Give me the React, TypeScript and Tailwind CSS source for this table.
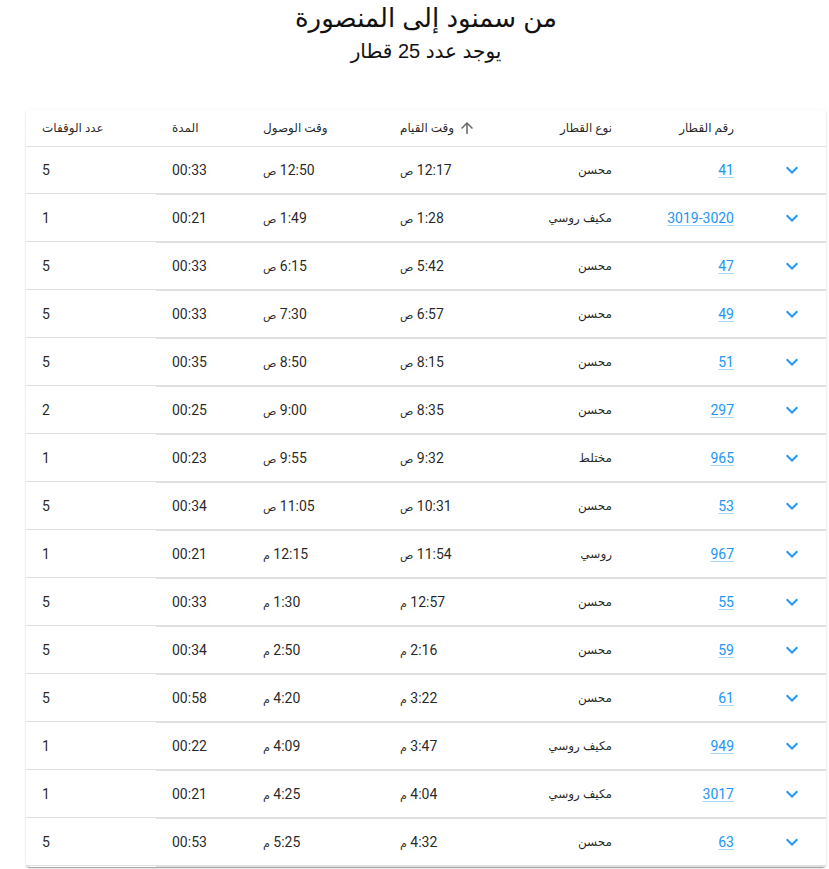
import React from "react";

type Row = { num: string; type: string; dep: string; arr: string; dur: string; stops: string };

const rows: Row[] = [
  { num: "41", type: "محسن", dep: "12:17 ص", arr: "12:50 ص", dur: "00:33", stops: "5" },
  { num: "3019-3020", type: "مكيف روسي", dep: "1:28 ص", arr: "1:49 ص", dur: "00:21", stops: "1" },
  { num: "47", type: "محسن", dep: "5:42 ص", arr: "6:15 ص", dur: "00:33", stops: "5" },
  { num: "49", type: "محسن", dep: "6:57 ص", arr: "7:30 ص", dur: "00:33", stops: "5" },
  { num: "51", type: "محسن", dep: "8:15 ص", arr: "8:50 ص", dur: "00:35", stops: "5" },
  { num: "297", type: "محسن", dep: "8:35 ص", arr: "9:00 ص", dur: "00:25", stops: "2" },
  { num: "965", type: "مختلط", dep: "9:32 ص", arr: "9:55 ص", dur: "00:23", stops: "1" },
  { num: "53", type: "محسن", dep: "10:31 ص", arr: "11:05 ص", dur: "00:34", stops: "5" },
  { num: "967", type: "روسي", dep: "11:54 ص", arr: "12:15 م", dur: "00:21", stops: "1" },
  { num: "55", type: "محسن", dep: "12:57 م", arr: "1:30 م", dur: "00:33", stops: "5" },
  { num: "59", type: "محسن", dep: "2:16 م", arr: "2:50 م", dur: "00:34", stops: "5" },
  { num: "61", type: "محسن", dep: "3:22 م", arr: "4:20 م", dur: "00:58", stops: "5" },
  { num: "949", type: "مكيف روسي", dep: "3:47 م", arr: "4:09 م", dur: "00:22", stops: "1" },
  { num: "3017", type: "مكيف روسي", dep: "4:04 م", arr: "4:25 م", dur: "00:21", stops: "1" },
  { num: "63", type: "محسن", dep: "4:32 م", arr: "5:25 م", dur: "00:53", stops: "5" },
];

const grid = "grid grid-cols-[76px_122px_108px_136px_137px_91px_130px]";
const font = { fontFamily: "Roboto, 'DejaVu Sans', sans-serif" };

function Chevron() {
  return (
    <svg width="24" height="24" viewBox="0 0 24 24" className="fill-[#2196f3]">
      <path d="M7.41 8.59 12 13.17l4.59-4.58L18 10l-6 6-6-6 1.41-1.41z" />
    </svg>
  );
}

function ArrowUp() {
  return (
    <svg width="18" height="18" viewBox="0 0 24 24" className="fill-[#666]">
      <path d="M4 12l1.41 1.41L11 7.83V20h2V7.83l5.58 5.59L20 12l-8-8-8 8z" />
    </svg>
  );
}

function Time({ v }: { v: string }) {
  const [t, s] = v.split(" ");
  return (
    <span>
      <span className="text-[14px]">{t}</span> <span className="text-[11px]">{s}</span>
    </span>
  );
}

export default function App() {
  return (
    <div dir="rtl" className="bg-white min-h-[869px] text-[rgba(0,0,0,0.87)]" style={font}>
      <div className="ml-[26px] mr-auto w-[800px]">
        <div className="text-center" style={{ fontFamily: "'Liberation Sans', 'DejaVu Sans', sans-serif" }}>
          <h1 className="text-[26px] leading-[34px] pt-px text-[#111]">من سمنود إلى المنصورة</h1>
          <h2 className="text-[20px] leading-[28px] mt-[2px] text-[#111]">يوجد عدد 25 قطار</h2>
        </div>
        <div className="mt-[45px] bg-white rounded-[4px] shadow-[0_2px_1px_-1px_rgba(0,0,0,0.2),0_1px_1px_0_rgba(0,0,0,0.14),0_1px_3px_0_rgba(0,0,0,0.12)]">
          <div className={`${grid} h-[37px] items-center border-b border-[#e0e0e0] text-[12px]`}>
            <div />
            <div className="px-4 text-right">رقم القطار</div>
            <div className="px-4 text-right">نوع القطار</div>
            <div className="px-4 flex items-center justify-end gap-[4px]">
              <ArrowUp />
              <span>وقت القيام</span>
            </div>
            <div className="px-4 text-left">وقت الوصول</div>
            <div className="px-4 text-left">المدة</div>
            <div className="px-4 text-left">عدد الوقفات</div>
          </div>
          {rows.map((r) => (
            <div key={r.num} className={`${grid} h-[48px] text-[14px]`}>
              <div className="flex items-center justify-center pl-[8px] border-b-2 border-[#e0e0e0]">
                <Chevron />
              </div>
              <div className="px-4 flex items-center justify-start border-b-2 border-[#e0e0e0]">
                <a href="#" className="text-[#2196f3] underline decoration-[#2196f3]/40 underline-offset-[2px]">
                  {r.num}
                </a>
              </div>
              <div className="px-4 flex items-center justify-start text-[12px] border-b-2 border-[#e0e0e0]">{r.type}</div>
              <div className="px-4 flex items-center justify-end border-b-2 border-[#e0e0e0]">
                <Time v={r.dep} />
              </div>
              <div className="px-4 flex items-center justify-end border-b-2 border-[#e0e0e0]">
                <Time v={r.arr} />
              </div>
              <div className="px-4 flex items-center justify-end border-b-2 border-[#e0e0e0]">{r.dur}</div>
              <div className="flex flex-col">
                <div className="px-4 flex-1 flex items-center justify-end border-b border-[#e0e0e0]">{r.stops}</div>
                <div className="h-px" />
              </div>
            </div>
          ))}
        </div>
      </div>
    </div>
  );
}
